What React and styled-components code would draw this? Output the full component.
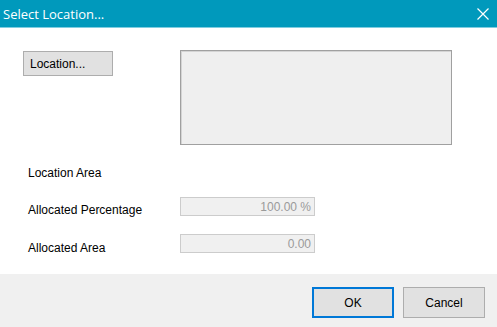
import styled, { createGlobalStyle } from "styled-components";

const Global = createGlobalStyle`
  html, body { margin: 0; padding: 0; background: #ffffff; }
  body { font-family: "Liberation Sans", Arial, sans-serif; }
`;

const Window = styled.div`
  width: 497px;
  height: 327px;
  display: flex;
  flex-direction: column;
  background: #ffffff;
  overflow: hidden;
`;

const TitleBar = styled.div`
  height: 27px;
  flex: none;
  background: #0099bc;
  display: flex;
  align-items: center;
  justify-content: space-between;
  padding: 0 7px 0 3px;
  color: #ffffff;
  font-family: "Open Sans", "Noto Sans", sans-serif;
  font-size: 13px;
  border-bottom: 1px solid #7fcde0;
`;

const CloseIcon = styled.svg`
  width: 14px;
  height: 14px;
`;

const Body = styled.div`
  flex: 1;
  display: grid;
  grid-template-columns: 157px 272px;
  grid-template-rows: 95px 35px 36px 37px;
  align-content: start;
  padding: 22px 0 0 23px;
  font-size: 12px;
  color: #000000;
`;

const PushButton = styled.button`
  font-family: "Liberation Sans", Arial, sans-serif;
  font-size: 12px;
  color: #000;
  background: #e1e1e1;
  border: 1px solid #adadad;
  padding: 0 0 0 6px;
  text-align: left;
  width: 90px;
  height: 25px;
  margin-top: 1px;
`;

const ListBox = styled.div`
  width: 272px;
  height: 95px;
  box-sizing: border-box;
  background: #efefef;
  border: 1px solid #a0a0a0;
  box-shadow: inset 1px 1px 0 #d4d4d4;
`;

const Label = styled.div`
  padding-left: 5px;
  align-self: end;
  line-height: 14px;
  margin-bottom: ${(p) => p.$mb || 0}px;
`;

const Field = styled.div`
  width: 135px;
  height: 19px;
  box-sizing: border-box;
  align-self: end;
  background: #f0f0f0;
  border: 1px solid #cccccc;
  color: #9a9a9a;
  text-align: right;
  padding: 2px 3px 0 0;
  line-height: 14px;
`;

const Footer = styled.div`
  height: 53px;
  flex: none;
  background: #f0f0f0;
  display: flex;
  justify-content: flex-end;
  align-items: flex-start;
  gap: 9px;
  padding: 13px 12px 0 0;
  box-sizing: border-box;
`;

const DialogButton = styled.button`
  width: 82px;
  height: 31px;
  font-family: "Liberation Sans", Arial, sans-serif;
  font-size: 12px;
  color: #000;
  background: #e1e1e1;
  border: ${(p) => (p.$default ? "2px solid #0078d7" : "1px solid #adadad")};
  box-sizing: border-box;
`;

export default function App() {
  return (
    <Window>
      <Global />
      <TitleBar>
        <span>Select Location...</span>
        <CloseIcon viewBox="0 0 14 14">
          <path d="M1.5 1.5 L12.5 12.5 M12.5 1.5 L1.5 12.5" stroke="#fff" strokeWidth="1.2" />
        </CloseIcon>
      </TitleBar>
      <Body>
        <div>
          <PushButton>Location...</PushButton>
        </div>
        <ListBox />
        <Label>Location Area</Label>
        <div />
        <Label $mb={-1}>Allocated Percentage</Label>
        <Field>100.00 %</Field>
        <Label $mb={-2}>Allocated Area</Label>
        <Field>0.00</Field>
      </Body>
      <Footer>
        <DialogButton $default>OK</DialogButton>
        <DialogButton>Cancel</DialogButton>
      </Footer>
    </Window>
  );
}
